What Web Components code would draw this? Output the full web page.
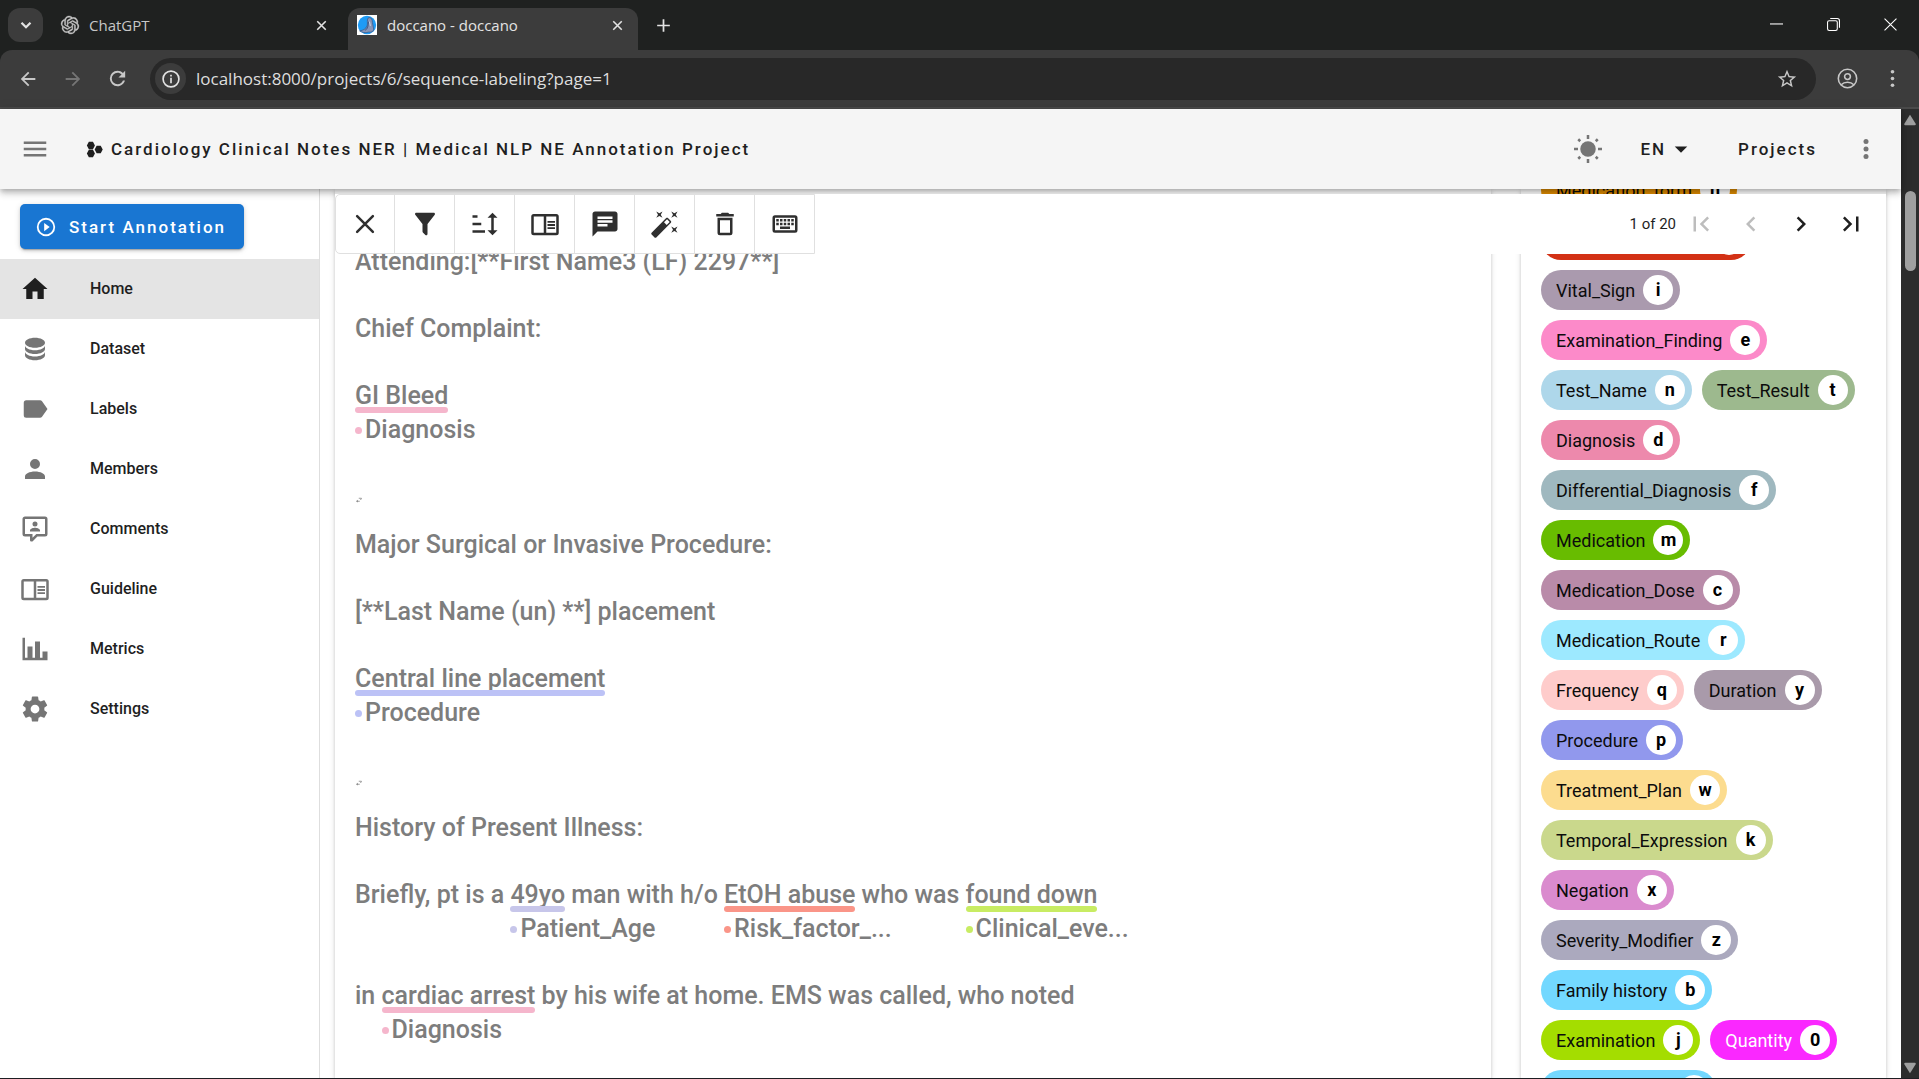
<!DOCTYPE html>
<html lang="en">
<head>
<meta charset="utf-8">
<title>doccano - doccano</title>
<style>
html, body { height: 100%; }
body { margin: 0; overflow: hidden; background: #fff; font-family: Roboto, "Liberation Sans", sans-serif; color: #1f1f1f; }
</style>
</head>
<body>
<doccano-window></doccano-window>
<script>
const ICONS = {
  close: '<path d="M5.7 5.7 18.3 18.3M18.3 5.7 5.7 18.3" fill="none" stroke="currentColor" stroke-width="2" stroke-linecap="round"/>',
  filter: '<path d="M14,12V19.88C14.04,20.18 13.94,20.5 13.71,20.71C13.32,21.1 12.69,21.1 12.3,20.71L10.29,18.7C10.06,18.47 9.96,18.16 10,17.87V12H9.97L4.21,4.62C3.87,4.19 3.95,3.56 4.38,3.22C4.57,3.08 4.78,3 5,3H19C19.22,3 19.43,3.08 19.62,3.22C20.05,3.56 20.13,4.19 19.79,4.62L14.03,12H14Z"/>',
  sort: '<path d="M19 7H22L18 3L14 7H17V17H14L18 21L22 17H19M2 17H12V19H2M6 5V7H2V5M2 11H9V13H2V11Z"/>',
  book: '<path d="M21,4H3A2,2 0 0,0 1,6V19A2,2 0 0,0 3,21H21A2,2 0 0,0 23,19V6A2,2 0 0,0 21,4M3,19V6H11V19H3M21,19H13V6H21V19M14,9.5H20V11H14V9.5M14,12H20V13.5H14V12M14,14.5H20V16H14V14.5Z"/>',
  message: '<path d="M20 2H4c-1.1 0-1.99.9-1.99 2L2 22l4-4h14c1.1 0 2-.9 2-2V4c0-1.1-.9-2-2-2zM6 9h12v2H6V9zm8 5H6v-2h8v2zm4-6H6V6h12v2z"/>',
  wand: '<path d="M7.5,5.6L5,7L6.4,4.5L5,2L7.5,3.4L10,2L8.6,4.5L10,7L7.5,5.6M19.5,15.4L22,14L20.6,16.5L22,19L19.5,17.6L17,19L18.4,16.5L17,14L19.5,15.4M22,2L20.6,4.5L22,7L19.5,5.6L17,7L18.4,4.5L17,2L19.5,3.4L22,2M13.34,12.78L15.78,10.34L13.66,8.22L11.22,10.66L13.34,12.78M14.37,7.29L16.71,9.63C17.1,10 17.1,10.65 16.71,11.04L5.04,22.71C4.65,23.1 4,23.1 3.63,22.71L1.29,20.37C0.9,20 0.9,19.35 1.29,18.96L12.96,7.29C13.35,6.9 14,6.9 14.37,7.29Z"/>',
  trash: '<path d="M6,19A2,2 0 0,0 8,21H16A2,2 0 0,0 18,19V7H6V19M8,9H16V19H8V9M15.5,4L14.5,3H9.5L8.5,4H5V6H19V4H15.5Z"/>',
  keyboard: '<path d="M4,5A2,2 0 0,0 2,7V17A2,2 0 0,0 4,19H20A2,2 0 0,0 22,17V7A2,2 0 0,0 20,5H4M4,7H20V17H4V7M5,8V10H7V8H5M8,8V10H10V8H8M11,8V10H13V8H11M14,8V10H16V8H14M17,8V10H19V8H17M5,11V13H7V11H5M8,11V13H10V11H8M11,11V13H13V11H11M14,11V13H16V11H14M17,11V13H19V11H17M8,14V16H16V14H8Z"/>',
  first: '<path d="M18.41,16.59L13.82,12L18.41,7.41L17,6L11,12L17,18L18.41,16.59M6,6H8V18H6V6Z"/>',
  prev: '<path d="M15.41,16.58L10.83,12L15.41,7.41L14,6L8,12L14,18L15.41,16.58Z"/>',
  next: '<path d="M8.59,16.58L13.17,12L8.59,7.41L10,6L16,12L10,18L8.59,16.58Z"/>',
  last: '<path d="M5.59,7.41L10.18,12L5.59,16.59L7,18L13,12L7,6L5.59,7.41M16,6H18V18H16V6Z"/>',
  home: '<path d="M10,20V14H14V20H19V12H22L12,3L2,12H5V20H10Z"/>',
  database: '<path d="M12,3C7.58,3 4,4.79 4,7C4,9.21 7.58,11 12,11C16.42,11 20,9.21 20,7C20,4.79 16.42,3 12,3M4,9V12C4,14.21 7.58,16 12,16C16.42,16 20,14.21 20,12V9C20,11.21 16.42,13 12,13C7.58,13 4,11.21 4,9M4,14V17C4,19.21 7.58,21 12,21C16.42,21 20,19.21 20,17V14C20,16.21 16.42,18 12,18C7.58,18 4,16.21 4,14Z"/>',
  label: '<path d="M17.63,5.84C17.27,5.33 16.67,5 16,5H5A2,2 0 0,0 3,7V17A2,2 0 0,0 5,19H16C16.67,19 17.27,18.66 17.63,18.15L22,12L17.63,5.84Z"/>',
  account: '<path d="M12,4A4,4 0 0,1 16,8A4,4 0 0,1 12,12A4,4 0 0,1 8,8A4,4 0 0,1 12,4M12,14C16.42,14 20,15.79 20,18V20H4V18C4,15.79 7.58,14 12,14Z"/>',
  comment: '<path d="M9,22A1,1 0 0,1 8,21V18H4A2,2 0 0,1 2,16V4C2,2.89 2.9,2 4,2H20A2,2 0 0,1 22,4V16A2,2 0 0,1 20,18H13.9L10.2,21.71C10,21.9 9.75,22 9.5,22H9M10,16V19.08L13.08,16H20V4H4V16H10M16,14H8V13C8,11.67 10.67,11 12,11C13.33,11 16,11.67 16,13V14M12,6A2,2 0 0,1 14,8A2,2 0 0,1 12,10A2,2 0 0,1 10,8A2,2 0 0,1 12,6Z"/>',
  chart: '<path d="M22,21H2V3H4V19H6V10H10V19H12V6H16V19H18V14H22V21Z"/>',
  cog: '<path d="M12,15.5A3.5,3.5 0 0,1 8.5,12A3.5,3.5 0 0,1 12,8.5A3.5,3.5 0 0,1 15.5,12A3.5,3.5 0 0,1 12,15.5M19.43,12.97C19.47,12.65 19.5,12.33 19.5,12C19.5,11.67 19.47,11.34 19.43,11L21.54,9.37C21.73,9.22 21.78,8.95 21.66,8.73L19.66,5.27C19.54,5.05 19.27,4.96 19.05,5.05L16.56,6.05C16.04,5.66 15.5,5.32 14.87,5.07L14.5,2.42C14.46,2.18 14.25,2 14,2H10C9.75,2 9.54,2.18 9.5,2.42L9.13,5.07C8.5,5.32 7.96,5.66 7.44,6.05L4.95,5.05C4.73,4.96 4.46,5.05 4.34,5.27L2.34,8.73C2.21,8.95 2.27,9.22 2.46,9.37L4.57,11C4.53,11.34 4.5,11.67 4.5,12C4.5,12.33 4.53,12.65 4.57,12.97L2.46,14.63C2.27,14.78 2.21,15.05 2.34,15.27L4.34,18.73C4.46,18.95 4.73,19.03 4.95,18.95L7.44,17.94C7.96,18.34 8.5,18.68 9.13,18.93L9.5,21.58C9.54,21.82 9.75,22 10,22H14C14.25,22 14.46,21.82 14.5,21.58L14.87,18.93C15.5,18.67 16.04,18.34 16.56,17.94L19.05,18.95C19.27,19.03 19.54,18.95 19.66,18.73L21.66,15.27C21.78,15.05 21.73,14.78 21.54,14.63L19.43,12.97Z"/>',
  menu: '<path d="M3,6H21V8H3V6M3,11H21V13H3V11M3,16H21V18H3V16Z"/>',
  dots: '<circle cx="12" cy="6" r="2"/><circle cx="12" cy="12" r="2"/><circle cx="12" cy="18" r="2"/>',
  play: '<path d="M12,20C7.59,20 4,16.41 4,12C4,7.59 7.59,4 12,4C16.41,4 20,7.59 20,12C20,16.41 16.41,20 12,20M12,2A10,10 0 0,0 2,12A10,10 0 0,0 12,22A10,10 0 0,0 22,12A10,10 0 0,0 12,2M10,16.5L16,12L10,7.5V16.5Z"/>',
  down: '<path d="M7,10L12,15L17,10H7Z"/>',
  sun: '<circle cx="12" cy="12" r="6.2"/><path d="M12 .8V4M12 20V23.2M.8 12H4M20 12H23.2" stroke="currentColor" stroke-width="2"/><path d="M4.2 4.2 5.8 5.8M18.2 18.2 19.8 19.8M4.2 19.8 5.8 18.2M18.2 5.8 19.8 4.2" stroke="currentColor" stroke-width="2"/>',
  hexes: '<path d="M2.6 1H8.4L11.2 6.2 8.4 11.6H2.6L-.2 6.2ZM2.6 12.4H8.4L11.2 17.8 8.4 23H2.6L-.2 17.8ZM13.6 6.7H19.4L22.2 12 19.4 17.3H13.6L10.8 12Z"/>',
  ret: '<path d="M5 17H15M11 5H22L18 12" fill="none" stroke="currentColor" stroke-width="3"/><path d="M0 17 7 11V22Z"/>',
  openai: '<path d="M22.2819 9.8211a5.9847 5.9847 0 0 0-.5157-4.9108 6.0462 6.0462 0 0 0-6.5098-2.9A6.0651 6.0651 0 0 0 4.9807 4.1818a5.9847 5.9847 0 0 0-3.9977 2.9 6.0462 6.0462 0 0 0 .7427 7.0966 5.98 5.98 0 0 0 .511 4.9107 6.051 6.051 0 0 0 6.5146 2.9001A5.9847 5.9847 0 0 0 13.2599 24a6.0557 6.0557 0 0 0 5.7718-4.2058 5.9894 5.9894 0 0 0 3.9977-2.9001 6.0557 6.0557 0 0 0-.7475-7.0729zm-9.022 12.6081a4.4755 4.4755 0 0 1-2.8764-1.0408l.1419-.0804 4.7783-2.7582a.7948.7948 0 0 0 .3927-.6813v-6.7369l2.02 1.1686a.071.071 0 0 1 .038.0615v5.5826a4.504 4.504 0 0 1-4.4945 4.4849zm-9.6607-4.1254a4.4708 4.4708 0 0 1-.5346-3.0137l.142.0852 4.783 2.7582a.7712.7712 0 0 0 .7806 0l5.8428-3.3685v2.3324a.0804.0804 0 0 1-.0332.0615L9.74 19.9502a4.4992 4.4992 0 0 1-6.1408-1.6464zM2.3408 7.8956a4.485 4.485 0 0 1 2.3655-1.9728V11.6a.7664.7664 0 0 0 .3879.6765l5.8144 3.3543-2.0201 1.1685a.0757.0757 0 0 1-.071 0l-4.8303-2.7865A4.504 4.504 0 0 1 2.3408 7.872zm16.5963 3.8558L13.1038 8.364 15.1192 7.2a.0757.0757 0 0 1 .071 0l4.8303 2.7913a4.4944 4.4944 0 0 1-.6765 8.1042v-5.6772a.79.79 0 0 0-.407-.667zm2.0107-3.0231l-.142-.0852-4.7735-2.7818a.7759.7759 0 0 0-.7854 0L9.409 9.2297V6.8974a.0662.0662 0 0 1 .0284-.0615l4.8303-2.7866a4.4992 4.4992 0 0 1 6.6802 4.66zM8.3065 12.863l-2.02-1.1638a.0804.0804 0 0 1-.038-.0567V6.0742a4.4992 4.4992 0 0 1 7.3757-3.4537l-.142.0805L8.704 5.459a.7948.7948 0 0 0-.3927.6813zm1.0976-2.3654l2.602-1.4998 2.6069 1.4998v2.9994l-2.5974 1.4997-2.6067-1.4997Z" stroke="currentColor" stroke-width=".5"/>',
  whale: '<rect width="24" height="24" fill="#fff"/><circle cx="12" cy="12" r="11" fill="#1e9bf5"/><path d="M3 19C8 18.500 12 16 12.500 11C12.500 6 12 4 14.500 3C17.500 3 18.500 6 18.500 9L20 17C20 20 17 21 14 20.500C10 22 6 21 3 19Z" fill="#8795b8" stroke="#34507e" stroke-width=".8"/><path d="M13.800 8C13.500 13 13 17 9.500 18.500" fill="none" stroke="#34507e"/><path d="M15 8 16 13" fill="none" stroke="#d3d9e6" stroke-width="1.200"/>',
  tabx: '<path d="M6 6 18 18M18 6 6 18" stroke="currentColor" stroke-width="2.200"/>',
  plus: '<path d="M12 4V20M4 12H20" stroke="currentColor" stroke-width="2.200"/>',
  chev: '<path d="M6 9 12 15 18 9" fill="none" stroke="currentColor" stroke-width="3"/>',
  back: '<path d="M20,11V13H8L13.500,18.500L12.080,19.920L4.160,12L12.080,4.080L13.500,5.500L8,11H20Z"/>',
  fwd: '<path d="M4,11V13H16L10.500,18.500L11.920,19.920L19.840,12L11.920,4.080L10.500,5.500L16,11H4Z"/>',
  reload: '<path d="M17.650,6.350C16.200,4.900 14.210,4 12,4A8,8 0 0,0 4,12A8,8 0 0,0 12,20C15.730,20 18.840,17.450 19.730,14H17.650C16.830,16.330 14.610,18 12,18A6,6 0 0,1 6,12A6,6 0 0,1 12,6C13.660,6 15.140,6.690 16.220,7.780L13,11H20V4L17.650,6.350Z"/>',
  info: '<circle cx="12" cy="12" r="9.500" fill="none" stroke="currentColor" stroke-width="2"/><path d="M11 10.500H13V17H11ZM11 7H13V9H11Z"/>',
  star: '<path d="M12,15.390L8.240,17.660L9.230,13.380L5.910,10.500L10.290,10.130L12,6.090L13.710,10.130L18.090,10.500L14.770,13.380L15.760,17.660M22,9.240L14.810,8.630L12,2L9.190,8.630L2,9.240L7.450,13.970L5.820,21L12,17.270L18.180,21L16.540,13.970L22,9.240Z"/>',
  user: '<circle cx="12" cy="12" r="10.500" fill="none" stroke="currentColor" stroke-width="1.800"/><circle cx="12" cy="9.800" r="3.300" fill="none" stroke="currentColor" stroke-width="1.800"/><path d="M4.800 19.200C8.500 15.300 15.500 15.300 19.200 19.200" fill="none" stroke="currentColor" stroke-width="1.800"/>',
  kebab: '<circle cx="12" cy="3.500" r="2.300"/><circle cx="12" cy="12" r="2.300"/><circle cx="12" cy="20.500" r="2.300"/>',
  min: '<path d="M0 11H24" stroke="currentColor" stroke-width="2"/>',
  restore: '<rect x="1" y="5" width="18" height="18" rx="3" fill="none" stroke="currentColor" stroke-width="2"/><path d="M6 1H19Q23 1 23 5V18" fill="none" stroke="currentColor" stroke-width="2"/>',
  winx: '<path d="M1 1 23 23M23 1 1 23" stroke="currentColor" stroke-width="2"/>',
  up: '<path d="M12 3 22 19Q22 21 20 21H4Q2 21 2 19Z"/>',
  dn: '<path d="M12 21 22 5Q22 3 20 3H4Q2 3 2 5Z"/>'
};

function define(name, css, html) {
  customElements.define(name, class extends HTMLElement {
    constructor() {
      super();
      this.attachShadow({ mode: 'open' });
    }
    connectedCallback() {
      const body = typeof html === 'function' ? html(this) : html;
      this.shadowRoot.innerHTML = '<style>*{box-sizing:border-box}button{font:inherit;letter-spacing:inherit;color:inherit;background:none;border:0;padding:0;margin:0}' + css + '</style>' + body;
    }
  });
}
const icon = (name, size) => `<app-icon name="${name}" size="${size}"></app-icon>`;

define('app-icon', ':host{display:inline-flex;flex:none} svg{display:block;overflow:visible}', el => {
  const s = el.getAttribute('size') || 30;
  return `<svg width="${s}" height="${s}" viewBox="0 0 24 24" fill="currentColor" aria-hidden="true">${ICONS[el.getAttribute('name')]}</svg>`;
});

/* ---------- browser chrome ---------- */
define('browser-tab', `
  :host{display:flex;align-items:center;width:290px;height:42px;padding:0 11px 8px 9px;font-size:15px;color:#c7c7c7}
  :host([active]){background:#3c3c3c;border-radius:12px 12px 0 0;color:#e3e3e3}
  .name{flex:1;padding-left:10px;line-height:20px}
  button{display:flex;width:20px;height:20px;align-items:center;justify-content:center;color:#e3e3e3}`,
  el => `${icon(el.getAttribute('icon'), el.getAttribute('icon-size'))}<span class="name"><slot></slot></span><button aria-label="Close tab">${icon('tabx', 17)}</button>`);

define('browser-tabs', `
  :host{display:flex;height:50px;padding:8px 9px 0 8px;background:#1f2120;color:#e3e3e3}
  .search{width:35px;height:34px;border-radius:12px;background:#3c3c3c;display:flex;align-items:center;justify-content:center}
  .first{margin:0 6px 0 9px}
  .new{width:34px;height:34px;margin-left:8px;display:flex;align-items:center;justify-content:center}
  .win{margin-left:auto;display:flex;color:#fff}
  .win button{width:57px;height:32px;display:flex;align-items:center;justify-content:center}
  .win button:last-child{margin-right:-9px}`,
  `<button class="search" aria-label="Search tabs">${icon('chev', 18)}</button>
   <browser-tab class="first" icon="openai" icon-size="18">ChatGPT</browser-tab>
   <browser-tab active icon="whale" icon-size="20">doccano - doccano</browser-tab>
   <button class="new" aria-label="New tab">${icon('plus', 19)}</button>
   <div class="win"><button aria-label="Minimize">${icon('min', 13)}</button><button aria-label="Restore">${icon('restore', 13)}</button><button aria-label="Close">${icon('winx', 13)}</button></div>`);

define('browser-toolbar', `
  :host{display:block;background:#1f2120}
  .bar{display:flex;align-items:center;height:59px;background:#3c3c3c;border-radius:12px 12px 0 0;border-bottom:2px solid #4a4a4a;padding:0 4px 0 5px;color:#c7c7c7}
  .nav{width:45px;height:36px;display:flex;align-items:center;justify-content:center}
  .nav[disabled]{color:#757575}
  .pill{flex:1;display:flex;align-items:center;height:42px;margin-left:10px;border-radius:21px;background:#282828;padding:0 18px 0 5px}
  .site{width:31px;height:31px;border-radius:50%;background:#3c3c3c;display:flex;align-items:center;justify-content:center;color:#e3e3e3}
  .mark{display:flex}
  input{flex:1;min-width:0;margin-left:10px;padding:0;border:0;outline:0;background:none;color:#dedede;font:17px/22px "Open Sans","Noto Sans",sans-serif}
  .end{width:45px;height:36px;display:flex;align-items:center;justify-content:center}
  .user{margin-left:9px}`,
  `<div class="bar">
    <button class="nav" aria-label="Back">${icon('back', 22)}</button>
    <button class="nav" aria-label="Forward" disabled>${icon('fwd', 22)}</button>
    <button class="nav" aria-label="Reload">${icon('reload', 23)}</button>
    <div class="pill">
      <button class="site" aria-label="Site information">${icon('info', 20)}</button>
      <input type="text" aria-label="Address" value="localhost:8000/projects/6/sequence-labeling?page=1">
      <button class="mark" aria-label="Bookmark">${icon('star', 22)}</button>
    </div>
    <button class="end user" aria-label="Profile">${icon('user', 21)}</button>
    <button class="end" aria-label="Browser menu">${icon('kebab', 19)}</button>
  </div>`);

define('page-scrollbar', `
  :host{display:flex;flex-direction:column;align-items:center;width:18px;background:#2c2c2c;color:#9f9f9f;padding:4px 0 3px}
  .track{flex:1;display:flex}
  .thumb{width:11px;height:80px;margin-top:64px;border-radius:6px;background:#9f9f9f}`,
  `${icon('up', 14)}<div class="track"><div class="thumb"></div></div>${icon('dn', 14)}`);

/* ---------- application bar ---------- */
define('app-header', `
  :host{display:flex;align-items:center;height:80px;background:#f5f5f5;padding:0 20px;font-size:17px;font-weight:500;letter-spacing:2px;color:#1f1f1f;
    position:relative;z-index:1;box-shadow:0 2px 5px -1px rgba(0,0,0,.2),0 5px 6px 0 rgba(0,0,0,.14),0 1px 12px 0 rgba(0,0,0,.12)}
  button{display:flex;align-items:center}
  .grey{color:#757575}
  .brand{display:flex;align-items:center;gap:7px;margin-left:37px}
  h1{margin:0;font:inherit}
  .right{margin-left:auto;display:flex;align-items:center}
  .lang{margin:0 0 0 37px}
  a{margin:0 34px 0 42px;color:inherit;text-decoration:none}`,
  `<button class="grey" aria-label="Menu">${icon('menu', 30)}</button>
   <div class="brand">${icon('hexes', 17)}<h1>Cardiology Clinical Notes NER | Medical NLP NE Annotation Project</h1></div>
   <div class="right">
     <button class="grey" aria-label="Theme">${icon('sun', 30)}</button>
     <button class="lang">EN${icon('down', 30)}</button>
     <a href="#projects">Projects</a>
     <button class="grey" aria-label="More">${icon('dots', 30)}</button>
   </div>`);

/* ---------- side navigation ---------- */
define('nav-item', `
  :host{display:block}
  a{display:flex;align-items:center;gap:40px;height:60px;padding:0 20px;font-size:16px;font-weight:500;color:#1f1f1f;text-decoration:none}
  span{padding-bottom:2px}
  app-icon{color:#757575}
  :host([active]) a{background:#e4e4e4}
  :host([active]) app-icon{color:#1f1f1f}`,
  el => `<a href="#">${icon(el.getAttribute('icon'), 30)}<span><slot></slot></span></a>`);

define('side-nav', `
  :host{display:block;width:320px;flex:none;border-right:1px solid #dedede;background:#fff}
  .start{display:flex;align-items:center;gap:12px;height:45px;margin:15px 20px 10px;padding:0 18px 0 15px;border-radius:5px;background:#1976d2;color:#fff;
    font-size:17px;font-weight:500;letter-spacing:2px;box-shadow:0 3px 1px -2px rgba(0,0,0,.2),0 2px 3px 0 rgba(0,0,0,.14),0 1px 6px 0 rgba(0,0,0,.12)}`,
  `<button class="start">${icon('play', 22)}Start Annotation</button>
   <nav>
    <nav-item icon="home" active>Home</nav-item><nav-item icon="database">Dataset</nav-item><nav-item icon="label">Labels</nav-item>
    <nav-item icon="account">Members</nav-item><nav-item icon="comment">Comments</nav-item><nav-item icon="book">Guideline</nav-item>
    <nav-item icon="chart">Metrics</nav-item><nav-item icon="cog">Settings</nav-item>
   </nav>`);

/* ---------- annotation toolbar ---------- */
define('annotation-toolbar', `
  :host{display:flex;align-items:center;justify-content:space-between;height:60px;background:#fff;color:#2f2f2f}
  .group{display:flex;border:1px solid #e0e0e0;border-radius:5px 0 0 5px}
  .group button{width:60px;height:58px;display:flex;align-items:center;justify-content:center;border-left:1px solid #e0e0e0}
  .group button:first-child{border-left:0;width:58px}
  .pages{display:flex;align-items:center;padding-right:10px;font-size:15px;color:#1f1f1f}
  .pages button{width:50px;height:45px;display:flex;align-items:center;justify-content:center}
  .pages button[disabled]{color:#bdbdbd}`,
  `<div class="group">${[['close','Clear'],['filter','Filter'],['sort','Sort'],['book','Guideline'],['message','Comments'],['wand','Auto labeling'],['trash','Delete'],['keyboard','Shortcuts']]
      .map(([n, t]) => `<button aria-label="${t}">${icon(n, 30)}</button>`).join('')}</div>
   <div class="pages"><span>1 of 20</span>
     <button aria-label="First page" disabled>${icon('first', 30)}</button><button aria-label="Previous page" disabled>${icon('prev', 30)}</button>
     <button aria-label="Next page">${icon('next', 30)}</button><button aria-label="Last page">${icon('last', 30)}</button></div>`);

/* ---------- document text ---------- */
define('text-entity', `
  :host{display:flex;flex-direction:column}
  .bar{height:6px;margin-top:-6px;border-radius:3px;background:var(--c)}
  .tag{display:flex;align-items:center;gap:3px;width:0;height:34px;white-space:nowrap}
  .dot{flex:none;width:7px;height:7px;border-radius:50%;background:var(--c)}`,
  el => `<span><slot></slot></span><span class="bar"></span><span class="tag"><i class="dot"></i><span>${el.getAttribute('tag')}</span></span>`);

define('text-line', `
  :host{display:flex;align-items:flex-start;white-space:pre;padding-bottom:33px}
  :host([ret]){height:48px;padding:17px 0 0 1px}`, '<slot></slot>');

define('document-text', `
  :host{display:block;padding:56px 20px 0;font-size:25px;font-weight:500;line-height:34px;color:#7d7d7d}`,
  `<text-line>Attending:[**First Name3 (LF) 2297**]</text-line>
   <text-line>Chief Complaint:</text-line>
   <text-line><text-entity tag="Diagnosis" style="--c:#f5b6cc">GI Bleed</text-entity></text-line>
   <text-line ret>${icon('ret', 6)}</text-line>
   <text-line>Major Surgical or Invasive Procedure:</text-line>
   <text-line>[**Last Name (un) **] placement</text-line>
   <text-line><text-entity tag="Procedure" style="--c:#bcc2f6">Central line placement</text-entity></text-line>
   <text-line ret>${icon('ret', 6)}</text-line>
   <text-line>History of Present Illness:</text-line>
   <text-line><span>Briefly, pt is a </span><text-entity tag="Patient_Age" style="--c:#c7c6ea">49yo</text-entity><span> man with h/o </span><text-entity tag="Risk_factor_..." style="--c:#fa9588">EtOH abuse</text-entity><span> who was </span><text-entity tag="Clinical_eve..." style="--c:#c8ec63">found down</text-entity></text-line>
   <text-line><span>in </span><text-entity tag="Diagnosis" style="--c:#f5b6cc">cardiac arrest</text-entity><span> by his wife at home. EMS was called, who noted</span></text-line>`);

/* ---------- label chips ---------- */
define('label-chip', `
  :host{display:block}
  button{display:flex;align-items:center;justify-content:flex-end;gap:8px;width:100%;height:40px;border-radius:20px;padding:0 7px 0 15px;background:var(--c);color:var(--t,#0c0c0c);font-size:18px}
  b{width:30px;height:30px;border-radius:50%;background:#fff;color:#000;line-height:30px;text-align:center;font-weight:700}`,
  el => `<button aria-label="${el.textContent || 'Label'}"><slot></slot><b>${el.getAttribute('key') || ''}</b></button>`);

const LABELS = [
  ['Medication_form', 'h', '#e08c00'], ['', '', '#d33115', 210], ['Vital_Sign', 'i', '#aa9aae'], ['Examination_Finding', 'e', '#fc8ac9'],
  ['Test_Name', 'n', '#aed7ea'], ['Test_Result', 't', '#9db98e'], ['Diagnosis', 'd', '#ed89ac'], ['Differential_Diagnosis', 'f', '#9fb8bf'],
  ['Medication', 'm', '#68bc00'], ['Medication_Dose', 'c', '#b98ba9'], ['Medication_Route', 'r', '#9de9ff'], ['Frequency', 'q', '#fecccb'],
  ['Duration', 'y', '#a99aaa'], ['Procedure', 'p', '#9198ed'], ['Treatment_Plan', 'w', '#fcdc8f'], ['Temporal_Expression', 'k', '#cad88c'],
  ['Negation', 'x', '#da8bce'], ['Severity_Modifier', 'z', '#aba9be'], ['Family history', 'b', '#73d8ff'], ['Examination', 'j', '#a4dd00'],
  ['Quantity', '0', '#fa28ff', 0, '#fff'], ['', '', '#73d8ff', 175]
];
define('label-list', `
  :host{display:flex;flex-wrap:wrap;gap:10px;align-content:flex-start;padding:0 20px;margin-top:-19px}`,
  LABELS.map(([n, k, c, w, t]) => `<label-chip key="${k}" style="--c:${c}${w ? `;min-width:${w}px` : ''}${t ? `;--t:${t}` : ''}">${n}</label-chip>`).join(''));

/* ---------- page ---------- */
define('annotation-page', `
  :host{display:grid;flex:1;min-width:0;padding:0 15px;overflow:hidden;grid-template:minmax(0,1fr)/minmax(0,1fr)}
  annotation-toolbar{grid-area:1/1;align-self:start;margin-top:5px;position:relative;z-index:2}
  .cols{grid-area:1/1;display:flex;gap:30px}
  .card{background:#fff;box-shadow:0 4px 1px -2px rgba(0,0,0,.2),0 2px 3px 0 rgba(0,0,0,.14),0 1px 6px 0 rgba(0,0,0,.12)}
  main{flex:1;min-width:0}
  aside{width:365px;flex:none}`,
  `<annotation-toolbar></annotation-toolbar>
   <div class="cols"><main class="card"><document-text></document-text></main><aside class="card"><label-list></label-list></aside></div>`);

define('doccano-window', `
  :host{display:flex;flex-direction:column;height:100vh;border-bottom:1px solid #1e1e22;box-sizing:border-box}
  .chrome{font-family:"Open Sans","Noto Sans",sans-serif}
  .view{flex:1;min-height:0;display:flex}
  .app{flex:1;min-width:0;display:flex;flex-direction:column}
  .body{flex:1;min-height:0;display:flex}`,
  `<div class="chrome"><browser-tabs></browser-tabs><browser-toolbar></browser-toolbar></div>
   <div class="view">
     <div class="app"><app-header></app-header><div class="body"><side-nav></side-nav><annotation-page></annotation-page></div></div>
     <page-scrollbar></page-scrollbar>
   </div>`);
</script>
</body>
</html>
